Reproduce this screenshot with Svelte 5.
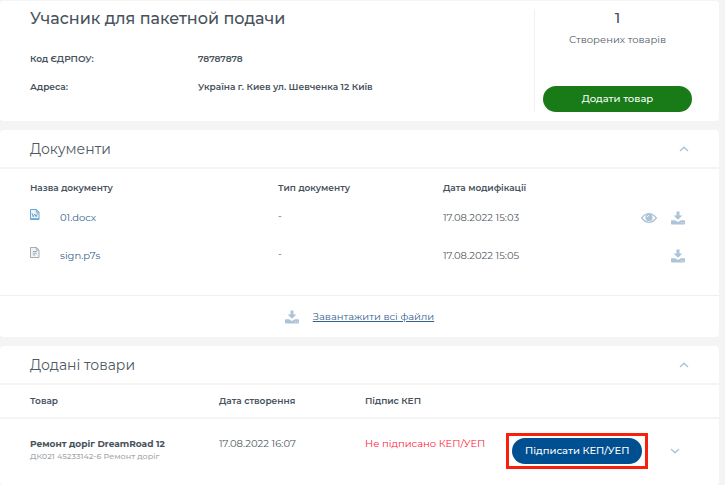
<script>
	let documentsOpen = true;
	let goodsOpen = true;

	const documents = [
		{ name: '01.docx', kind: 'word', type: '-', date: '17.08.2022 15:03', preview: true },
		{ name: 'sign.p7s', kind: 'text', type: '-', date: '17.08.2022 15:05', preview: false }
	];

	const goods = [
		{
			title: 'Ремонт доріг DreamRoad 12',
			code: 'ДК021 45233142-6 Ремонт доріг',
			date: '17.08.2022 16:07',
			status: 'Не підписано КЕП/УЕП'
		}
	];
</script>

{#snippet chevron(down)}
	<svg class="chevron" class:down width="10" height="6" viewBox="0 0 10 6">
		<path d="M1 5 5 1.3 9 5" fill="none" stroke="currentColor" stroke-width="1.4" />
	</svg>
{/snippet}

{#snippet download()}
	<svg width="14" height="14" viewBox="0 0 14 14" fill="currentColor">
		<path d="M5.5 0.4h3v4.2h2.9L7 8.8 2.6 4.6h2.9z" />
		<path
			fill-rule="evenodd"
			d="M.6 9.2h3.4L7 11l3-1.8h3.4q.6 0 .6.6v2.8q0 .9-.9.9H.9q-.9 0-.9-.9V9.8q0-.6.6-.6zm9.2 2.3v.8h.9v-.8zm2 0v.8h.9v-.8z"
		/>
	</svg>
{/snippet}

<div class="page">
	<section class="card company">
		<div class="info">
			<h1>Учасник для пакетной подачи</h1>
			<dl>
				<dt>Код ЄДРПОУ:</dt>
				<dd>78787878</dd>
				<dt>Адреса:</dt>
				<dd>Україна г. Киев ул. Шевченка 12 Київ</dd>
			</dl>
		</div>
		<div class="summary">
			<strong>{goods.length}</strong>
			<span>Створених товарів</span>
			<button class="btn add">Додати товар</button>
		</div>
	</section>

	<section class="card">
		<header>
			<h2>Документи</h2>
			<button class="icon" aria-label="Згорнути документи" on:click={() => (documentsOpen = !documentsOpen)}>
				{@render chevron(!documentsOpen)}
			</button>
		</header>
		{#if documentsOpen}
			<table class="documents">
				<thead>
					<tr>
						<th class="name">Назва документу</th>
						<th class="type">Тип документу</th>
						<th class="date">Дата модифікації</th>
						<th></th>
					</tr>
				</thead>
				<tbody>
					{#each documents as doc (doc.name)}
						<tr>
							<td>
								<div class="file {doc.kind}">
									<svg width="10" height="11" viewBox="0 0 10 11" fill="none" stroke="currentColor">
										<path d="M.5 .5h6l2.5 2.5v7.5h-8.5z" fill="#eef5fa" />
										<path d="M6.3 .5v2.7h2.7" />
										{#if doc.kind === 'word'}
											<path d="M2 4.2l1.2 3.6L4.7 5 6.2 7.8l1.2-3.6" />
											<path d="M.5 9.7h8.5" />
										{:else}
											<path d="M2.8 4.5h4M2.8 6.2h4M2.8 7.9h2.6" />
										{/if}
									</svg>
									<a href="#{doc.name}">{doc.name}</a>
								</div>
							</td>
							<td class="dash">{doc.type}</td>
							<td>{doc.date}</td>
							<td>
								<div class="actions">
									{#if doc.preview}
										<button class="icon" aria-label="Переглянути {doc.name}">
											<svg width="16" height="10" viewBox="0 0 16 10">
												<path d="M.7 5Q4 .7 8 .7T15.3 5Q12 9.3 8 9.3T.7 5z" fill="none" stroke="currentColor" stroke-width="1.3" />
												<circle cx="8" cy="4.4" r="3.6" fill="currentColor" />
												<path d="M6.2 4.2Q6.3 2.6 7.9 2.5" fill="none" stroke="#fff" stroke-width=".8" />
											</svg>
										</button>
									{/if}
									<button class="icon" aria-label="Завантажити {doc.name}">{@render download()}</button>
								</div>
							</td>
						</tr>
					{/each}
				</tbody>
			</table>
			<div class="all">
				{@render download()}
				<a href="#all">Завантажити всі файли</a>
			</div>
		{/if}
	</section>

	<section class="card">
		<header>
			<h2>Додані товари</h2>
			<button class="icon" aria-label="Згорнути товари" on:click={() => (goodsOpen = !goodsOpen)}>
				{@render chevron(!goodsOpen)}
			</button>
		</header>
		{#if goodsOpen}
			<table class="goods">
				<thead>
					<tr>
						<th class="item">Товар</th>
						<th class="created">Дата створення</th>
						<th class="status">Підпис КЕП</th>
						<th></th>
					</tr>
				</thead>
				<tbody>
					{#each goods as g (g.code)}
						<tr>
							<td>
								<strong>{g.title}</strong>
								<small>{g.code}</small>
							</td>
							<td>{g.date}</td>
							<td class="unsigned">{g.status}</td>
							<td class="last">
								<div class="sign">
									<div class="highlight">
										<button class="btn">Підписати КЕП/УЕП</button>
									</div>
									<button class="icon" aria-label="Розгорнути товар">{@render chevron(true)}</button>
								</div>
							</td>
						</tr>
					{/each}
				</tbody>
			</table>
		{/if}
	</section>
</div>

<style>
	:global(body) {
		margin: 0;
		background: #f4f4f4;
	}

	.page {
		display: flex;
		flex-direction: column;
		gap: 9px;
		padding: 1px 6px 0 0;
		font-family: Montserrat, Inter, 'Noto Sans', sans-serif;
		font-size: 10px;
		line-height: 14px;
		color: #505a63;
	}

	.card {
		background: #fff;
		border-radius: 4px;
	}

	h1,
	h2,
	dl,
	dd {
		margin: 0;
	}

	a {
		color: #33628f;
		text-decoration: none;
	}

	button {
		font: inherit;
		border: none;
		cursor: pointer;
	}

	svg {
		display: block;
	}

	.company {
		display: flex;
		justify-content: space-between;
		padding: 8px 27px 9px 30px;
	}

	h1 {
		font-size: 16px;
		font-weight: 500;
		line-height: 20px;
		color: #47525c;
	}

	dl {
		display: grid;
		grid-template-columns: 168px auto;
		row-gap: 14px;
		margin-top: 23px;
		font-size: 9px;
		font-weight: 600;
		color: #47525c;
	}

	.summary {
		box-sizing: border-box;
		width: 158px;
		padding-left: 8px;
		border-left: 1px solid #f0f0f0;
		display: flex;
		flex-direction: column;
		text-align: center;
	}

	.summary strong {
		font-size: 15px;
		font-weight: 500;
		line-height: 18px;
		color: #47525c;
	}

	.summary span {
		margin-top: 6px;
	}

	.btn {
		height: 26px;
		padding: 0 13px;
		border-radius: 13px;
		background: #004f90;
		color: #fff;
		font-weight: 500;
		white-space: nowrap;
	}

	.btn.add {
		margin-top: 39px;
		background: #187b18;
	}

	header {
		display: flex;
		align-items: center;
		justify-content: space-between;
		padding: 9px 30px 8px;
		border-bottom: 2px solid #f4f4f4;
	}

	h2 {
		font-size: 14px;
		font-weight: 400;
		line-height: 20px;
	}

	.icon {
		padding: 0;
		background: none;
		color: #adc3d7;
	}

	.chevron.down {
		transform: rotate(180deg);
	}

	table {
		width: 100%;
		table-layout: fixed;
		border-collapse: collapse;
	}

	th,
	td {
		padding: 0;
		text-align: left;
		vertical-align: top;
	}

	th {
		font-size: 9px;
		font-weight: 600;
		color: #47525c;
	}

	th:first-child,
	td:first-child {
		padding-left: 30px;
	}

	.name {
		width: 248px;
	}

	.type {
		width: 165px;
	}

	.date {
		width: 120px;
	}

	.documents th {
		padding-top: 12px;
		padding-bottom: 16px;
	}

	.documents td {
		height: 38px;
	}

	.documents .dash {
		line-height: 10px;
	}

	.file {
		display: flex;
		gap: 20px;
	}

	.file svg {
		margin-top: -2px;
	}

	.word svg {
		color: #6ba5cf;
	}

	.text svg {
		color: #aaa;
	}

	.actions {
		display: flex;
		justify-content: flex-end;
		align-items: center;
		gap: 14px;
		padding-right: 34px;
	}

	.all {
		display: flex;
		align-items: center;
		justify-content: center;
		gap: 14px;
		margin-top: 8px;
		padding: 14px 0 13px;
		border-top: 1px solid #f0f0f0;
		color: #adc3d7;
	}

	.all a {
		text-decoration: underline;
	}

	.item {
		width: 189px;
	}

	.created {
		width: 146px;
	}

	.status {
		width: 141px;
	}

	.goods th {
		padding-top: 9px;
		padding-bottom: 9px;
		border-bottom: 2px solid #f4f4f4;
	}

	.goods td {
		padding-top: 18px;
		padding-bottom: 16px;
	}

	.goods td.last {
		padding-top: 14px;
	}

	.goods strong {
		display: block;
		font-size: 9px;
		font-weight: 700;
		line-height: 14px;
		color: #47525c;
	}

	.goods small {
		display: block;
		font-size: 8px;
		font-weight: 500;
		line-height: 10px;
		color: #a3a7ab;
	}

	.goods .unsigned {
		color: #ff2038;
	}

	.sign {
		display: flex;
		align-items: center;
		justify-content: space-between;
		padding-right: 39px;
	}

	.highlight {
		padding: 2px 3px;
		border: 3px solid #f9200b;
	}
</style>
